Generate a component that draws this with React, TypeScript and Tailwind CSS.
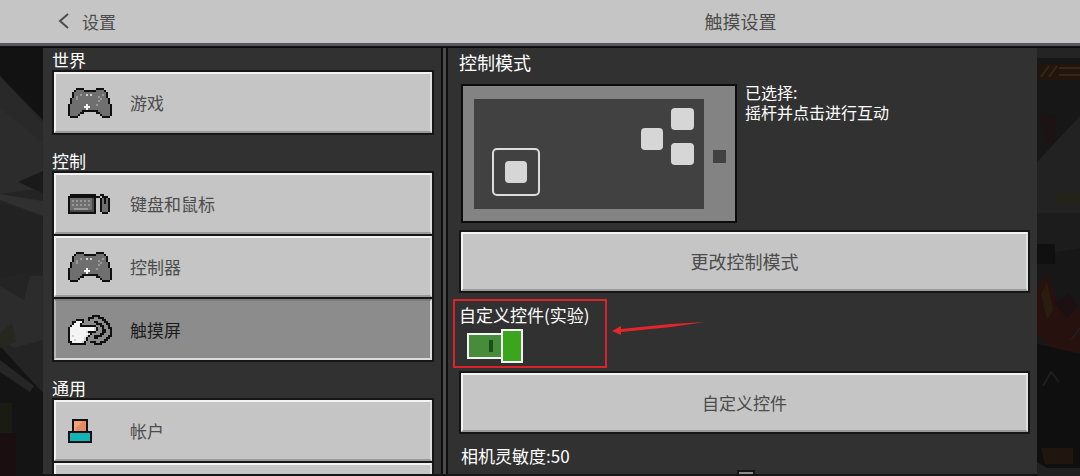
import { useState } from "react";
import type { ReactNode } from "react";

const PALETTE: Record<string, string> = {
  k: "#101010",
  g: "#6f6f6f",
  d: "#4a4a4a",
  l: "#989898",
  w: "#f4f4f4",
  e: "#d0d0d0",
  o: "#e58a62",
  p: "#f0a27c",
  t: "#12b5b5",
};

const CONTROLLER = [
  "....kkkk......kkkk....",
  "...kggggkkkkkkggggk...",
  "..kggggggggggggggggk..",
  "..kggglggegeggggglgk..",
  "..kglgggggggggglgggk..",
  ".kgglggggggggggglgggk.",
  ".kggggggggggggglggggk.",
  ".kggggggggggggggggggk.",
  "kggggggggwgggglggggggk",
  "kgggggggwwwggggggggggk".replace(" ", ""),
  "kggggggggwgggggggggggk",
  "kggggggkkkkkkkkggggggk",
  "kgggggkk......kkgggggk",
  "kggggk..........kggggk",
  ".kkkk............kkkk.",
].map((row) => row.slice(0, 22));

const KEYBOARD = [
  ".kkkkkkkkkkkkk..kk...",
  "kkkkkkkkkkkkkkkk.kkk.",
  "kgggggggggggdk..kgkgk",
  "kglglglglglgdk..kgkgk",
  "kgggggggggggdk..kgkgk",
  "kglglglglglgdk..kgggk",
  "kgggggggggggdk..kgggk",
  "kgglllllllggdk..kgggk",
  "kddddddddddddk..kgggk",
  "kkkkkkkkkkkkkk...kkk.",
];

const HAND = [
  "............kkkk......",
  "..........kkk..kkk....",
  "....kkkk..k......kk...",
  "..kkwwwk.....kk...kk..",
  "..kwwwk.......kkk..kk.",
  ".kwwwwkkkkkkkk..kk..k.",
  "kwwwwwwwwwwwwek..k..kk",
  "kwwwwwwwwwwwwek..kk..k",
  "kwwwwwwwwekkkk...kk..k",
  "kwwwwwwwwwek....kk...k",
  "kwewwwwwwek..kkkk...kk",
  "kwwwwwwwek...kk....kk.",
  "kwwewwwwek........kk..",
  "kkwwwwwek..kkk..kkk...",
  ".kkkkkkkk....kkkk.....",
];

const ACCOUNT = [
  "..kkkkkkkk..",
  "..kppppook..",
  "..kpppoook..",
  "..kppooook..",
  "..kpoooook..",
  "..kpoooook..",
  "kkkkkkkkkkkk",
  "kttttttttttk",
  "kttttttttttk",
  "kttttttttttk",
  "kttttttttttk",
  "kkkkkkkkkkkk",
];

function PixelIcon({ rows }: { rows: string[] }) {
  const cols = rows[0].length;
  return (
    <svg
      width={cols * 2}
      height={rows.length * 2}
      viewBox={`0 0 ${cols} ${rows.length}`}
      shapeRendering="crispEdges"
      aria-hidden="true"
    >
      {rows.flatMap((row, y) =>
        row.split("").map((c, x) =>
          PALETTE[c] ? (
            <rect key={`${x}-${y}`} x={x} y={y} width="1" height="1" fill={PALETTE[c]} />
          ) : null,
        ),
      )}
    </svg>
  );
}

function MenuItem({
  icon,
  label,
  selected = false,
}: {
  icon: string[];
  label: string;
  selected?: boolean;
}) {
  return (
    <button
      type="button"
      aria-current={selected ? "page" : undefined}
      className="-mt-[2px] block w-full border-2 border-[#161617] first:mt-0"
    >
      <span
        className={
          selected
            ? "flex h-[61px] items-center border-2 border-t-[#7c7c7c] border-r-[#dcdcdc] border-b-[#dcdcdc] border-l-[#b5b5b5] bg-[#8c8c8c] pl-3 text-[#1c1c1c]"
            : "flex h-[61px] items-center border-2 border-t-[#f3f3f3] border-r-[#dedede] border-b-[#9a9a9a] border-l-[#f3f3f3] bg-[#c5c5c5] pl-3 text-[#4c4c4c]"
        }
      >
        <span className="w-[62px]">
          <PixelIcon rows={icon} />
        </span>
        <span>{label}</span>
      </span>
    </button>
  );
}

function MenuGroup({ title, children }: { title: string; children: ReactNode }) {
  return (
    <section className="mb-4">
      <h2 className="h-5 leading-5 text-white">{title}</h2>
      <div>{children}</div>
    </section>
  );
}

function WideButton({ children }: { children: ReactNode }) {
  return (
    <button type="button" className="block w-full border-2 border-[#161617]">
      <span className="flex h-[59px] items-center justify-center border-2 border-t-[#f3f3f3] border-r-[#dedede] border-b-[#9a9a9a] border-l-[#f3f3f3] bg-[#c5c5c5] text-[#4c4c4c]">
        {children}
      </span>
    </button>
  );
}

function ModePreview() {
  return (
    <svg width="276" height="139" viewBox="0 0 276 139" className="shrink-0" aria-hidden="true">
      <rect width="276" height="139" fill="#0c0c0c" />
      <rect x="2" y="2" width="272" height="135" fill="#838383" />
      <rect x="13" y="15" width="230" height="110" fill="#414141" />
      <rect x="32" y="65" width="46" height="46" rx="4" fill="none" stroke="#dcdcdc" strokeWidth="2" />
      <rect x="44" y="77" width="22" height="22" rx="4" fill="#d6d6d6" />
      <rect x="180" y="44" width="22" height="22" rx="4" fill="#d6d6d6" />
      <rect x="210" y="24" width="23" height="22" rx="4" fill="#d6d6d6" />
      <rect x="210" y="59" width="23" height="22" rx="4" fill="#d6d6d6" />
      <rect x="252" y="66" width="13" height="13" fill="#414141" />
    </svg>
  );
}

function LeftBackdrop() {
  return (
    <svg viewBox="0 0 43 428" preserveAspectRatio="none" className="h-full w-[43px] shrink-0" aria-hidden="true">
      <rect width="43" height="428" fill="#242424" />
      <path d="M0 0H43V72L0 28Z" fill="#121212" />
      <path d="M0 28L43 76V130L0 100Z" fill="#292929" />
      <path d="M0 60L43 95V140L0 146Z" fill="#2c2c2c" />
      <path d="M18 134L43 123V145Z" fill="#1a1a1a" />
      <path d="M0 146L43 153V168L0 152Z" fill="#303030" />
      <path d="M0 155L43 170V225H25L0 230Z" fill="#222" />
      <path d="M0 238L24 252L30 228H43V292L14 300L0 290Z" fill="#2c2c2c" />
      <path d="M0 298L43 345V428H0Z" fill="#141414" />
      <path d="M0 312L34 338L30 344L0 324Z" fill="#262626" />
      <path d="M0 285L12 275L16 294L0 300Z" fill="#26271f" />
      <path d="M0 355H12V385H0Z" fill="#1a1b13" />
      <path d="M0 385H16V428H0Z" fill="#1a0e10" />
    </svg>
  );
}

function RightBackdrop() {
  return (
    <svg viewBox="0 0 43 428" preserveAspectRatio="none" className="h-full w-[43px] shrink-0" aria-hidden="true">
      <rect width="43" height="428" fill="#171717" />
      <path d="M0 0H43V10H0Z" fill="#242424" />
      <path d="M1 16H43V32H3Z" fill="#20160e" />
      <path d="M4 29L12 18M12 29L20 18M22 20H43M22 27H43" stroke="#3c2512" strokeWidth="2" />
      <path d="M2 64L20 68L16 98L6 88Z" fill="#1d1214" />
      <path d="M0 114L43 68V165H0Z" fill="#222222" />
      <path d="M20 144H43V158H20Z" fill="#23221b" />
      <path d="M0 165H43V200L0 208Z" fill="#1c1c1c" />
      <path d="M0 196H18V216H0Z" fill="#101010" />
      <path d="M0 238L12 226L22 262H43V304H20L0 286Z" fill="#26110e" />
      <path d="M4 246L10 234L16 262L10 272Z" fill="#2b1c10" />
      <path d="M18 256L32 246L40 258L30 270Z" fill="#1c1013" />
      <path d="M0 296L43 306V428H0Z" fill="#0f0f0f" />
      <path d="M6 338L14 324L22 334M34 292L43 280" stroke="#1e1e1e" strokeWidth="2" fill="none" />
      <path d="M4 400H36V416H8Z" fill="#21160e" />
      <path d="M0 414L10 420H43V428H0Z" fill="#202020" />
    </svg>
  );
}

export default function App() {
  const [custom, setCustom] = useState(true);

  return (
    <div className="flex h-screen flex-col overflow-hidden bg-[#161616] font-['Noto_Sans_CJK_SC',sans-serif] text-[17px]">
      <header className="grid h-12 shrink-0 grid-cols-[441fr_639fr] items-start border-b-2 border-[#0e0e0e] bg-[#58585a]">
        <div className="flex h-[43px] items-center bg-[#c5c5c5] pl-[58px] text-[#4c4c4c]">
          <button type="button" className="flex items-center gap-3">
            <svg width="12" height="18" viewBox="0 0 12 18" fill="none" stroke="#4c4c4c" strokeWidth="2" aria-hidden="true">
              <path d="M10 1L2 8L10 15" />
            </svg>
            <span>设置</span>
          </button>
        </div>
        <h1 className="flex h-[43px] items-center justify-center bg-[#c5c5c5] pr-10 text-[18px] text-[#4c4c4c]">
          触摸设置
        </h1>
      </header>

      <div className="flex min-h-0 flex-1">
        <LeftBackdrop />
        <div className="grid min-w-0 flex-1 grid-cols-[398fr_7px_589fr] overflow-hidden border-b-2 border-[#161616] bg-[#313131]">
          <nav aria-label="设置" className="min-h-0 overflow-hidden pt-[2px] pr-[7px] pl-[9px]">
            <MenuGroup title="世界">
              <MenuItem icon={CONTROLLER} label="游戏" />
            </MenuGroup>
            <MenuGroup title="控制">
              <MenuItem icon={KEYBOARD} label="键盘和鼠标" />
              <MenuItem icon={CONTROLLER} label="控制器" />
              <MenuItem icon={HAND} label="触摸屏" selected />
            </MenuGroup>
            <MenuGroup title="通用">
              <MenuItem icon={ACCOUNT} label="帐户" />
              <MenuItem icon={ACCOUNT} label="" />
            </MenuGroup>
          </nav>

          <div className="border-x-2 border-[#0e0e0e] bg-[#4b4b4b]" />

          <main className="min-h-0 overflow-hidden pt-[2px] pr-[7px] pl-[11px] text-white">
            <h2 className="h-[34px] text-[18px] leading-6">控制模式</h2>
            <div className="flex items-start gap-2 pl-[2px]">
              <ModePreview />
              <p className="-mt-[2px] text-[16px] leading-5">
                已选择:
                <br />
                摇杆并点击进行互动
              </p>
            </div>
            <div className="mt-[7px] text-[18px]">
              <WideButton>更改控制模式</WideButton>
            </div>

            <div className="relative mt-2 mb-2">
              <label className="block w-fit cursor-pointer">
                <span className="block h-7 leading-7">自定义控件(实验)</span>
                <input
                  type="checkbox"
                  className="sr-only"
                  checked={custom}
                  onChange={(e) => setCustom(e.target.checked)}
                />
                <span className={custom ? "ml-2 flex items-center" : "ml-2 flex flex-row-reverse items-center justify-end"}>
                  <span className="flex h-[26px] w-[34px] items-center justify-end border-2 border-r-0 border-[#f4f4f4] bg-[#478c3a] pr-2">
                    <span className="h-3 w-1 bg-[#1c4f17]" />
                  </span>
                  <span className="h-[34px] w-[22px] border-2 border-[#f4f4f4] bg-[#3ba51e]" />
                </span>
              </label>
              <div className="pointer-events-none absolute -top-[2px] -left-[6px] h-[69px] w-[154px] border-2 border-[#dc2329]" />
              <svg
                width="96"
                height="16"
                viewBox="0 0 96 16"
                className="pointer-events-none absolute top-5 left-[152px]"
                aria-hidden="true"
              >
                <path d="M1 10L10 5L10 8L60 3L94 1L60 6L10 11L10 14Z" fill="#e3262c" />
              </svg>
            </div>

            <WideButton>自定义控件</WideButton>
            <label className="block pt-2 pl-[2px]">
              <span className="block h-7 leading-7">相机灵敏度:50</span>
              <input
                type="range"
                defaultValue={50}
                className="block h-10 w-full appearance-none bg-transparent [&::-webkit-slider-thumb]:h-10 [&::-webkit-slider-thumb]:w-[18px] [&::-webkit-slider-thumb]:appearance-none [&::-webkit-slider-thumb]:border-2 [&::-webkit-slider-thumb]:border-[#161617] [&::-webkit-slider-thumb]:bg-[#8c8c8c]"
              />
            </label>
          </main>
        </div>
        <RightBackdrop />
      </div>
    </div>
  );
}
